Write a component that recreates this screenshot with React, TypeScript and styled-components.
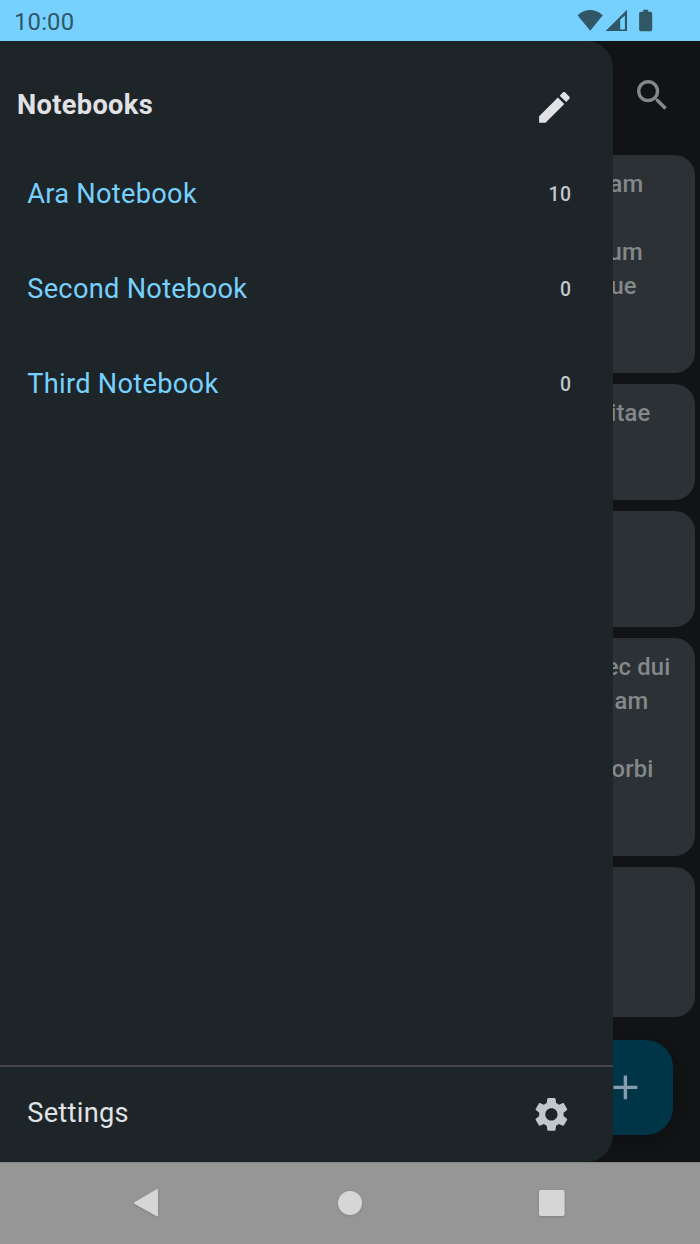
import React from "react";
import styled, { createGlobalStyle } from "styled-components";

const GlobalStyle = createGlobalStyle`
  * { box-sizing: border-box; }
  body { margin: 0; background: #111314; font-family: Roboto, sans-serif; }
`;

const Screen = styled.div`
  width: 700px;
  height: 1244px;
  display: flex;
  flex-direction: column;
  overflow: hidden;
`;

const StatusBar = styled.header`
  height: 41px;
  flex: none;
  display: flex;
  align-items: center;
  justify-content: space-between;
  padding: 1px 47px 0 14px;
  background: #76d1ff;
  color: #315666;
`;

const Clock = styled.span`
  padding-top: 1px;
  font-size: 23.8px;
  font-weight: 400;
  line-height: 28px;
  letter-spacing: 0.2px;
`;

const StatusIcons = styled.svg`
  display: block;
  width: 76px;
  height: 24px;
  fill: currentColor;
`;

const Main = styled.main`
  position: relative;
  flex: 1;
  min-height: 0;
  overflow: hidden;
  background: #111314;
`;

const TopBar = styled.div`
  height: 114px;
  display: flex;
  justify-content: flex-end;
  padding: 33.5px 27.3px 0 0;
  color: #83888b;
`;

const CardList = styled.div`
  display: flex;
  flex-direction: column;
  gap: 10.7px;
  padding: 0 5.5px;
`;

const Card = styled.article<{ $height: number }>`
  height: ${(p) => p.$height}px;
  padding-top: 12px;
  border-radius: 20.4px;
  background: #2c3135;
  color: #83888b;
`;

const CardLine = styled.p<{ $end: number }>`
  height: 34px;
  margin: 0;
  padding-right: ${(p) => p.$end}px;
  font-size: 23.8px;
  font-weight: 500;
  line-height: 34px;
  letter-spacing: 0.17px;
  text-align: right;
`;

const Fab = styled.button`
  position: absolute;
  right: 27.3px;
  bottom: 27px;
  width: 95.3px;
  height: 95.3px;
  display: grid;
  place-items: center;
  padding: 0;
  border: 0;
  border-radius: 27.2px;
  background: #003447;
  color: #849eae;
  box-shadow: 0 6px 14px rgba(0, 0, 0, 0.22);
`;

const Drawer = styled.aside`
  position: absolute;
  inset: 0 auto 0 0;
  width: 612.5px;
  display: flex;
  flex-direction: column;
  border-radius: 0 27.2px 27.2px 0;
  background: #1e2528;
`;

const DrawerHeader = styled.div`
  height: 105px;
  flex: none;
  display: flex;
  align-items: center;
  justify-content: space-between;
  padding: 28px 37.3px 0 17px;
  color: #e1e2e5;
`;

const Title = styled.h1`
  margin: -5px 0 0;
  font-size: 27.2px;
  font-weight: 700;
  line-height: 40px;
  letter-spacing: 0.34px;
`;

const NotebookList = styled.nav`
  flex: 1;
`;

const NotebookRow = styled.div`
  height: 95.3px;
  display: flex;
  align-items: center;
  justify-content: space-between;
  padding: 0 40.8px 0 27.2px;
`;

const Label = styled.span<{ $accent?: boolean }>`
  color: ${(p) => (p.$accent ? "#76d1ff" : "#e1e2e5")};
  font-size: 27.2px;
  line-height: 40px;
  letter-spacing: 0.3px;
`;

const Count = styled.span`
  padding-top: 2px;
  color: #c0c7cd;
  font-size: 19.4px;
  font-weight: 500;
  line-height: 28px;
  letter-spacing: 0.6px;
`;

const DrawerFooter = styled.div`
  height: 97px;
  flex: none;
  display: flex;
  align-items: center;
  justify-content: space-between;
  padding: 0 41px 3px 27.2px;
  border-top: 2px solid #48464a;
  color: #c0c7cd;
`;

const Icon = styled.svg<{ $drop?: number }>`
  display: block;
  flex: none;
  width: 40.8px;
  height: 40.8px;
  fill: currentColor;
  margin-top: ${(p) => p.$drop ?? 0}px;
`;

const NavBar = styled.footer`
  height: 82px;
  flex: none;
  display: flex;
  align-items: center;
  justify-content: space-between;
  padding: 0 134px 1px 132px;
  border-top: 1px solid #838585;
  background: #969696;
`;

const NavIcon = styled.svg`
  display: block;
  width: 28px;
  height: 30px;
  fill: #d6d6d6;
  filter: drop-shadow(0 1px 1px rgba(0, 0, 0, 0.14));
`;

const notebooks = [
  { name: "Ara Notebook", count: 10 },
  { name: "Second Notebook", count: 0 },
  { name: "Third Notebook", count: 0 },
];

const notes = [
  {
    height: 218.3,
    lines: [
      { text: "quam", end: 51 },
      { text: "", end: 0 },
      { text: "ipsum", end: 51.6 },
      { text: "neque", end: 57.8 },
    ],
  },
  { height: 116.2, lines: [{ text: "vitae", end: 44 }] },
  { height: 116.2, lines: [] },
  {
    height: 218.3,
    lines: [
      { text: "nec dui", end: 24 },
      { text: "Etiam", end: 46 },
      { text: "", end: 0 },
      { text: "Morbi", end: 41 },
    ],
  },
  { height: 150.4, lines: [] },
];

export default function App() {
  return (
    <Screen>
      <GlobalStyle />
      <StatusBar>
        <Clock>10:00</Clock>
        <StatusIcons viewBox="0 0 76 24">
          <path d="M0.6 6.2Q13.2-4 25.8 6.2L13.2 21.8Z" />
          <path fillRule="evenodd" d="M28.6 22L50 .8V22ZM43.2 20.4H47.9V6.4L43.2 10.4Z" />
          <path d="M66.2.8h5v2h2.2q1.8 0 1.8 1.8v15.9q0 1.8-1.8 1.8H63.9q-1.8 0-1.8-1.8V4.6q0-1.8 1.8-1.8h2.3Z" />
        </StatusIcons>
      </StatusBar>
      <Main>
        <TopBar>
          <Icon viewBox="0 0 24 24">
            <path d="M15.5 14h-.79l-.28-.27C15.41 12.59 16 11.11 16 9.5 16 5.91 13.09 3 9.5 3S3 5.91 3 9.5 5.91 16 9.5 16c1.61 0 3.09-.59 4.23-1.57l.27.28v.79l5 4.99L20.49 19l-4.99-5zm-6 0C7.01 14 5 11.99 5 9.5S7.01 5 9.5 5 14 7.01 14 9.5 11.99 14 9.5 14z" />
          </Icon>
        </TopBar>
        <CardList>
          {notes.map((note, i) => (
            <Card key={i} $height={note.height}>
              {note.lines.map((line, j) => (
                <CardLine key={j} $end={line.end}>
                  {line.text}
                </CardLine>
              ))}
            </Card>
          ))}
        </CardList>
        <Fab aria-label="Add note">
          <Icon viewBox="0 0 24 24">
            <path d="M19 13h-6v6h-2v-6H5v-2h6V5h2v6h6v2z" />
          </Icon>
        </Fab>
        <Drawer>
          <DrawerHeader>
            <Title>Notebooks</Title>
            <Icon viewBox="0 0 24 24">
              <path d="M3 17.25V21h3.75L17.81 9.94l-3.75-3.75L3 17.25zM20.71 7.04c.39-.39.39-1.02 0-1.41l-2.34-2.34c-.39-.39-1.02-.39-1.41 0l-1.83 1.83 3.75 3.75 1.83-1.83z" />
            </Icon>
          </DrawerHeader>
          <NotebookList>
            {notebooks.map((n) => (
              <NotebookRow key={n.name}>
                <Label $accent>{n.name}</Label>
                <Count>{n.count}</Count>
              </NotebookRow>
            ))}
          </NotebookList>
          <DrawerFooter>
            <Label>Settings</Label>
            <Icon viewBox="0 0 24 24" $drop={3}>
              <path d="M19.14 12.94c.04-.3.06-.61.06-.94 0-.32-.02-.64-.07-.94l2.03-1.58c.18-.14.23-.41.12-.61l-1.92-3.32c-.12-.22-.37-.29-.59-.22l-2.39.96c-.5-.38-1.03-.7-1.62-.94l-.36-2.54c-.04-.24-.24-.41-.48-.41h-3.84c-.24 0-.43.17-.47.41l-.36 2.54c-.59.24-1.13.57-1.62.94l-2.39-.96c-.22-.08-.47 0-.59.22L2.74 8.87c-.12.21-.08.47.12.61l2.03 1.58c-.05.3-.09.63-.09.94s.02.64.07.94l-2.03 1.58c-.18.14-.23.41-.12.61l1.92 3.32c.12.22.37.29.59.22l2.39-.96c.5.38 1.03.7 1.62.94l.36 2.54c.05.24.24.41.48.41h3.84c.24 0 .44-.17.47-.41l.36-2.54c.59-.24 1.13-.56 1.62-.94l2.39.96c.22.08.47 0 .59-.22l1.92-3.32c.12-.22.07-.47-.12-.61l-2.01-1.58zM12 15.6c-1.98 0-3.6-1.62-3.6-3.6s1.62-3.6 3.6-3.6 3.6 1.62 3.6 3.6-1.62 3.6-3.6 3.6z" />
            </Icon>
          </DrawerFooter>
        </Drawer>
      </Main>
      <NavBar>
        <NavIcon viewBox="0 0 28 30">
          <path d="M2.8 14.1L24.2 1.5Q26 .6 26 2.4V27.2Q26 29 24.2 28.1L2.8 15.9Q1.4 15 2.8 14.1Z" />
        </NavIcon>
        <NavIcon viewBox="0 0 28 30">
          <circle cx="15" cy="15" r="12" />
        </NavIcon>
        <NavIcon viewBox="0 0 28 30">
          <rect x="1" y="2" width="25.6" height="26" rx="2" />
        </NavIcon>
      </NavBar>
    </Screen>
  );
}
